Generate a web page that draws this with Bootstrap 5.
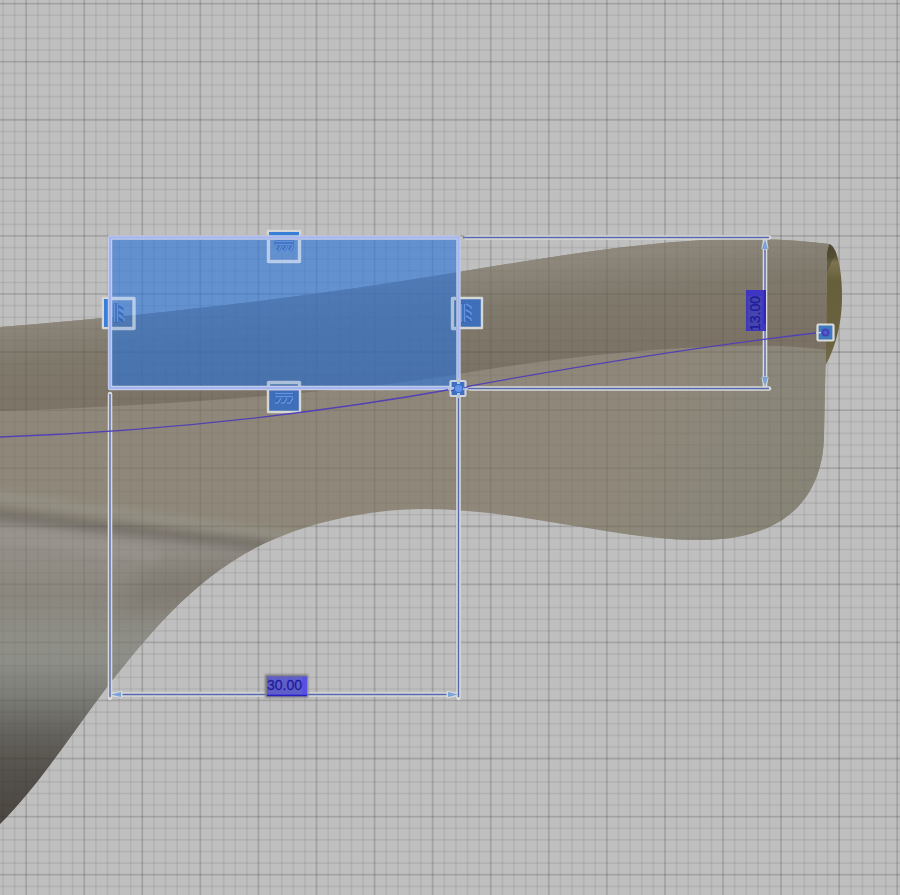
<!DOCTYPE html>
<html lang="en">
<head>
<meta charset="utf-8">
<meta name="viewport" content="width=device-width, initial-scale=1">
<title>Sketch canvas</title>
<link href="https://cdn.jsdelivr.net/npm/bootstrap@5.3.0/dist/css/bootstrap.min.css" rel="stylesheet">
<style>
  body { background: #bfbfbf; }
  .sketch-view text { font-family: "Liberation Sans", Arial, sans-serif; font-size: 14px; fill: #1f1c9c; stroke: #1f1c9c; stroke-width: .3; }
  .halo { fill: none; stroke: #d9d9d9; stroke-width: 4.6; stroke-linecap: round; }
  .core { fill: none; stroke: #5468ad; stroke-width: 1.4; }
  .arrow-halo { fill: #d9d9d9; stroke: #d9d9d9; stroke-width: 3; stroke-linejoin: round; }
  .arrow-tip { fill: #7ba3d8; }
  .frame { fill: none; stroke: #fff; stroke-opacity: .55; stroke-width: 3.4; stroke-linejoin: round; }
  .frame-out { stroke: #d6d6d4; stroke-width: 2.4; fill: #3e6fb8; stroke-linejoin: round; }
  .hatch { fill: none; stroke: #2f62b2; stroke-width: 3.6; stroke-opacity: .75; stroke-linecap: round; }
  .hatch-in { fill: none; stroke: #6393de; stroke-width: 1.5; }
</style>
</head>
<body class="m-0">
<main class="vh-100 overflow-hidden d-flex">
<svg class="sketch-view w-100 h-100 flex-grow-1" viewBox="0 0 900 895" preserveAspectRatio="xMidYMid slice" role="img" aria-label="Sketch on a body, rectangle 30.00 by 13.00">
  <defs>
    <linearGradient id="upperShade" gradientUnits="userSpaceOnUse" x1="300" y1="290" x2="312" y2="395">
      <stop offset="0" stop-color="#8e887c"/><stop offset=".12" stop-color="#898377"/><stop offset=".4" stop-color="#7f796c"/><stop offset="1" stop-color="#7b7265"/>
    </linearGradient>
    <linearGradient id="rightShade" gradientUnits="userSpaceOnUse" x1="640" y1="430" x2="790" y2="510">
      <stop offset="0" stop-color="#88857a" stop-opacity="0"/><stop offset=".5" stop-color="#8a867a" stop-opacity=".7"/><stop offset="1" stop-color="#868476" stop-opacity=".9"/>
    </linearGradient>
    <linearGradient id="lowShade" gradientUnits="userSpaceOnUse" x1="0" y1="510" x2="0" y2="825">
      <stop offset="0" stop-color="#88837b"/><stop offset=".06" stop-color="#96918a"/><stop offset=".14" stop-color="#938e87"/><stop offset=".27" stop-color="#8b877e"/><stop offset=".42" stop-color="#8f8f88"/><stop offset=".48" stop-color="#8d8e87"/><stop offset=".58" stop-color="#7e7f79"/><stop offset=".7" stop-color="#66645e"/><stop offset=".84" stop-color="#54504b"/><stop offset="1" stop-color="#4b4640"/>
    </linearGradient>
    <linearGradient id="mouthShade" x1="0" y1="0" x2="0" y2="1">
      <stop offset="0" stop-color="#4c4731"/><stop offset=".11" stop-color="#5c5536"/><stop offset=".15" stop-color="#7c7350"/><stop offset=".21" stop-color="#756b48"/><stop offset=".3" stop-color="#675f3b"/><stop offset=".8" stop-color="#6a623f"/><stop offset="1" stop-color="#766d4d"/>
    </linearGradient>
    <clipPath id="bodyClip"><path d="M0 327 C170 313 310 297 459 272 C590 250 670 239 745 239 Q790 239 829 244 L827 252 L826 350 L825 385 L824 436 C823 494 789 539 703 540 C620 541 520 509 425 509 C365 509 303 524 257 547 C190 582 148 636 110 683 C72 733 40 784 0 824 Z"/></clipPath>
    <filter id="soft3" color-interpolation-filters="sRGB" filterUnits="userSpaceOnUse" x="-60" y="450" width="420" height="140"><feGaussianBlur stdDeviation="4"/></filter>
    <filter id="soft12" color-interpolation-filters="sRGB" filterUnits="userSpaceOnUse" x="0" y="500" width="400" height="180"><feGaussianBlur stdDeviation="12"/></filter>
    <filter id="lift" x="-20%" y="-30%" width="140%" height="160%"><feGaussianBlur stdDeviation="1"/></filter>
    <!-- dashes across a wide stroke make evenly spaced lines -->
    <g id="gridLines" fill="none" stroke="#000">
      <g stroke-opacity=".065">
        <path d="M2.2 447.5H900" stroke-width="895" stroke-dasharray="1.6 10.014"/>
        <path d="M450 2.9V895" stroke-width="900" stroke-dasharray="1.6 10.014"/>
      </g>
      <g stroke-opacity=".085">
        <path d="M25.2 447.5H900" stroke-width="895" stroke-dasharray="1.8 56.27"/>
        <path d="M450 2.7V895" stroke-width="900" stroke-dasharray="1.8 56.27"/>
      </g>
    </g>
    <g id="hatchMark">
      <path class="hatch" d="M-8 -5H8M-8 -3H8M-4 0L-6 3M2 0L0 3M8 0L6 3"/>
      <path class="hatch-in" d="M-9 -5.500H9M-9 -2.500H9M-3 -1L-6 4H-9M3 -1L0 4H-3M9 -1L6 4H3"/>
    </g>
    <g id="hatchMarkSide">
      <path class="hatch" d="M-5 -8V8M-3 -8V8M0 -7L3 -5M0 -1L3 1M0 5L3 7"/>
      <path class="hatch-in" d="M-5.500 -9V9M-2.500 -9V9M-1 -9L4 -6V-4M-1 -3L4 0V2M-1 3L4 6V8"/>
    </g>
  </defs>

  <rect x="-900" y="-900" width="2700" height="2700" fill="#bfbfbf"/>
  <use href="#gridLines"/>

  <!-- solid body -->
  <path d="M829 244 C837 246 842 269 842 297 C842 325 834 351 825 366 L826 250 Z" fill="url(#mouthShade)"/>
  <path d="M829 245L836 252L827 272V250Z" fill="#4a4530" opacity=".5"/>
  <g clip-path="url(#bodyClip)">
    <rect y="230" width="850" height="600" fill="#8f887a"/>
    <path d="M600 340H850V560H600Z" fill="url(#rightShade)"/>
    <path d="M0 225H850V352L827 350Q790 345 740 346C640 348 550 359 459 374C370 389 190 405 0 411Z" fill="url(#upperShade)"/>
    <path d="M-20 514L110 529L262 547L262 850H-20Z" fill="url(#lowShade)"/>
    <path d="M110 612L150 570L290 555L220 605Z" fill="#7c766d" opacity=".7" filter="url(#soft12)"/>
    <path d="M-30 493L110 512L300 539" fill="none" stroke="#97958a" stroke-width="12" opacity=".7" filter="url(#soft3)"/>
    <path d="M-30 511L110 528L300 550" fill="none" stroke="#77726b" stroke-width="11" filter="url(#soft3)"/>
    <path d="M-30 534L60 542L160 556" fill="none" stroke="#a09b96" stroke-width="14" opacity=".4" filter="url(#soft3)"/>
    <use href="#gridLines" opacity=".5"/>
  </g>

  <!-- sketch profile -->
  <rect x="110" y="238" width="348" height="150" fill="#2973da" fill-opacity=".61"/>

  <!-- constraint glyph frames -->
  <path class="frame-out" d="M268 237V231H300V237Z"/>
  <path class="frame-out" d="M109 298H103V328H109Z"/>
  <path class="frame-out" d="M268 389V412H300V389Z"/>
  <path class="frame-out" d="M459 298H482V328H459Z"/>
  <path d="M269 232H299V237H269ZM104 299H109V327H104Z" fill="#387fda"/>
  <path class="frame" d="M268.500 240V261.500H299.500V240M112 298.500H134V328.500H112M268.500 386V382.500H299.500V386M456 298.500H452.500V328.500H456"/>
  <use href="#hatchMark" x="284" y="247"/>
  <use href="#hatchMark" x="284" y="399"/>
  <use href="#hatchMarkSide" x="120" y="313"/>
  <use href="#hatchMarkSide" x="467" y="313"/>

  <!-- extension and dimension lines -->
  <path class="halo" d="M110 394V698M458.500 396V698M112 694.500H457M466 237.500H769M470 388.500H769M765 240V386"/>
  <path class="core" d="M110 394V697M458.500 396V697M112 694.500H457M463 237.500H769M468 388.500H769M765 240V386"/>
  <path class="arrow-halo" d="M113 694.500L121 692.500V696.500ZM456 694.500L448 692.500V696.500ZM765 240L763 248H767ZM765 386L763 378H767Z"/>
  <path class="arrow-tip" d="M111 694.500L121 692V697ZM458 694.500L448 692V697ZM765 239L762 249H768ZM765 387L762 377H768Z"/>

  <!-- rectangle outline -->
  <rect x="110" y="237.500" width="348.500" height="150.500" fill="none" stroke="#c3cce4" stroke-width="4.400" stroke-linejoin="round"/>
  <rect x="110" y="237.500" width="348.500" height="150.500" fill="none" stroke="#a3b4f4" stroke-width="2"/>

  <!-- spline -->
  <path d="M0 437C170 431 320 413 459 388C590 364 710 345 820 332.500" fill="none" stroke="#5141b4" stroke-width="1.300"/>

  <!-- end points -->
  <rect x="450.500" y="381" width="15" height="15" rx="1" fill="#3d70c0" stroke="#d0d5dd" stroke-width="2.200"/>
  <path d="M458.500 378V384M448 388.500H454M463 388.500H468M458.500 393V398" stroke="#b7c5e2" stroke-width="3"/>
  <circle cx="458.500" cy="388.500" r="3.500" fill="#6793e8"/>
  <path d="M451 391L454 389.500M463 388L468 387" stroke="#4a4cbc" stroke-width="1.200"/>
  <rect x="817.500" y="324.500" width="16" height="16" rx="1" fill="#3f79bd" stroke="#dcdcd8" stroke-width="2.200"/>
  <circle cx="825.500" cy="332.500" r="3" fill="#4b62cc" stroke="#4742b8" stroke-width="2"/>
  <path d="M816 333L821 332.500" stroke="#cdd6e6" stroke-width="1.600"/>

  <!-- dimension values -->
  <rect x="265" y="674.500" width="43" height="23" fill="#77777f" filter="url(#lift)"/>
  <rect x="267" y="676.500" width="40" height="19.500" fill="#5850e0"/>
  <rect x="267" y="677" width="35" height="17" fill="#605fc9"/>
  <path d="M267 695.500H307" stroke="#2522bd" stroke-width="1.500"/>
  <text x="267" y="690">30.00</text>
  <rect x="746" y="290" width="20" height="41" fill="#3e35c2"/>
  <rect x="748" y="296" width="14" height="34" fill="#4644ae"/>
  <path d="M765 290V324" stroke="#3026ba" stroke-width="2"/>
  <text transform="translate(760 331) rotate(-90)">13.00</text>
</svg>
</main>
<script src="https://cdn.jsdelivr.net/npm/bootstrap@5.3.0/dist/js/bootstrap.bundle.min.js"></script>
</body>
</html>
